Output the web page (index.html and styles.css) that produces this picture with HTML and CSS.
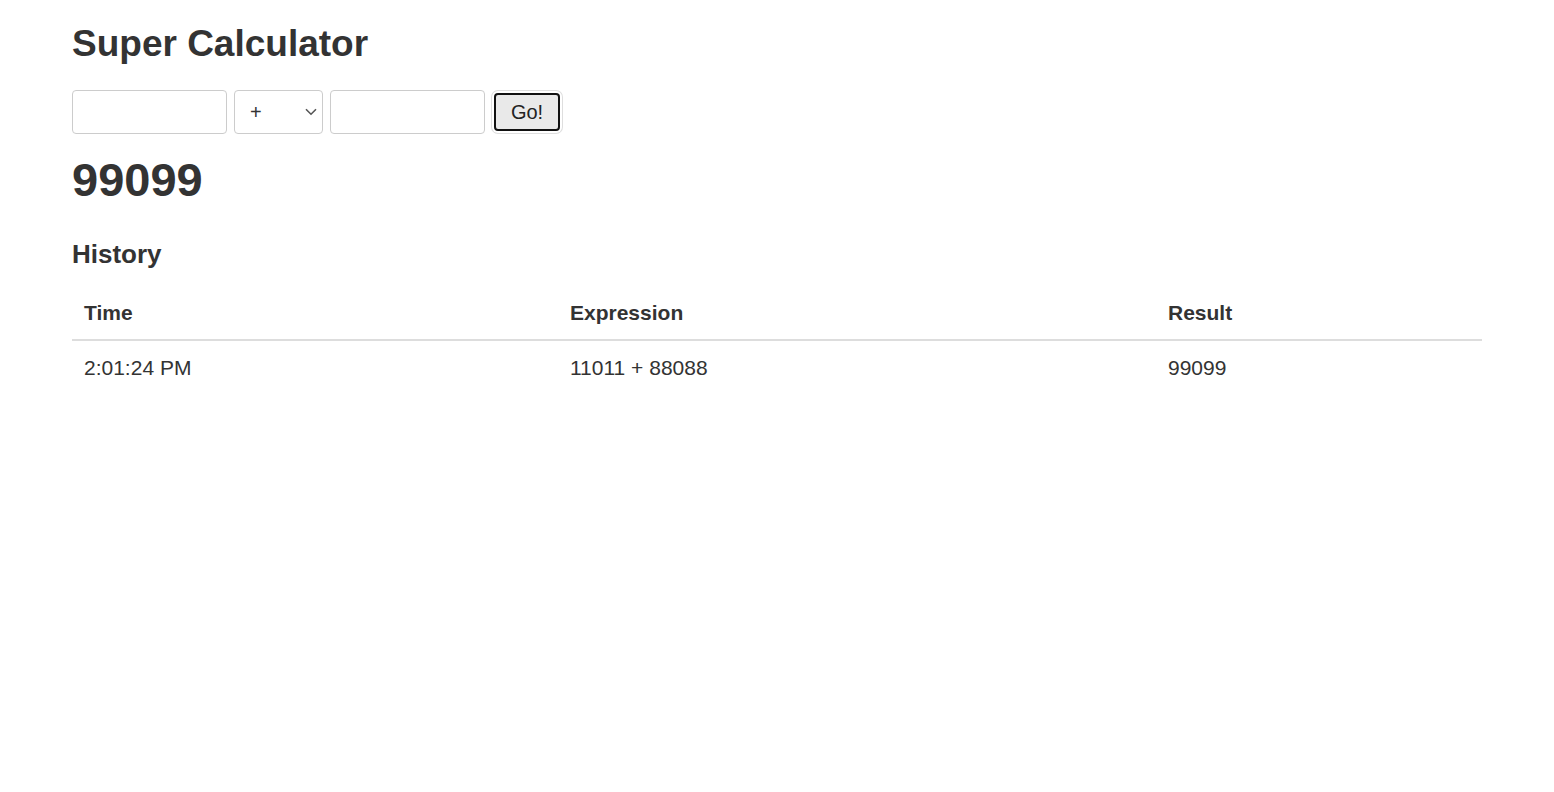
FILE: index.html
```html
<!DOCTYPE html>
<html lang="en">
<head>
<meta charset="utf-8">
<title>Super Calculator</title>
<link rel="stylesheet" href="styles.css">
</head>
<body>
<div class="container">
  <h1 class="title">Super Calculator</h1>
  <form class="calc-form">
    <input class="field field-first" type="text">
    <div class="select-wrap">
      <select class="op-select">
        <option>+</option>
        <option>-</option>
        <option>*</option>
        <option>/</option>
      </select>
      <svg class="chevron" width="12" height="8" viewBox="0 0 12 8"><path d="M1 1.2 L6 6.2 L11 1.2" fill="none" stroke="#555" stroke-width="1.6"/></svg>
    </div>
    <input class="field field-second" type="text">
    <button class="go-btn" type="button">Go!</button>
  </form>
  <h2 class="result">99099</h2>
  <h3 class="history-title">History</h3>
  <table class="history">
    <thead>
      <tr>
        <th class="col-time">Time</th>
        <th class="col-expr">Expression</th>
        <th class="col-result">Result</th>
      </tr>
    </thead>
    <tbody>
      <tr>
        <td>2:01:24 PM</td>
        <td>11011 + 88088</td>
        <td>99099</td>
      </tr>
    </tbody>
  </table>
</div>
</body>
</html>
```
FILE: styles.css
```css
html, body {
  margin: 0;
  padding: 0;
  background: #fff;
}
body {
  font-family: "Liberation Sans", Arial, Helvetica, sans-serif;
  color: #333;
  font-size: 20px;
}
.container {
  padding: 24px 72px 0 72px;
}
.title {
  margin: 0;
  font-size: 37px;
  line-height: 40px;
  font-weight: bold;
}
.calc-form {
  margin-top: 26px;
  display: flex;
  align-items: center;
  height: 44px;
}
.field {
  box-sizing: border-box;
  width: 155px;
  height: 44px;
  border: 1px solid #ccc;
  border-radius: 4px;
  padding: 6px 12px;
  font-family: inherit;
  font-size: 20px;
  color: #333;
  background: #fff;
  margin: 0;
}
.field-first {
  margin-right: 7px;
}
.select-wrap {
  position: relative;
  width: 89px;
  height: 44px;
  margin-right: 7px;
}
.op-select {
  -webkit-appearance: none;
  appearance: none;
  box-sizing: border-box;
  width: 89px;
  height: 44px;
  border: 1px solid #ccc;
  border-radius: 4px;
  background: #fff;
  padding: 0 0 0 15px;
  font-family: inherit;
  font-size: 20px;
  color: #333;
  margin: 0;
}
.chevron {
  position: absolute;
  left: 71px;
  top: 18px;
  pointer-events: none;
}
.go-btn {
  box-sizing: border-box;
  margin-left: 9px;
  width: 66px;
  height: 38px;
  border: 2px solid #111;
  border-radius: 4px;
  background: #e9e9e9;
  box-shadow: 0 0 0 2px #fff, 0 0 0 3px #dedede;
  font-family: inherit;
  font-size: 20px;
  color: #222;
  padding: 0;
}
.result {
  margin: 21px 0 0 0;
  font-size: 47px;
  line-height: 50px;
  font-weight: bold;
}
.history-title {
  margin: 34px 0 0 0;
  font-size: 26px;
  line-height: 30px;
  font-weight: bold;
}
.history {
  margin-top: 18px;
  width: 1410px;
  border-collapse: collapse;
  table-layout: fixed;
}
.col-time { width: 462px; }
.col-expr { width: 574px; }
.col-result { width: 302px; }
.history th {
  text-align: left;
  font-size: 21px;
  font-weight: bold;
  line-height: 28px;
  padding: 12px 12px;
  border-bottom: 2px solid #ddd;
}
.history td {
  font-size: 21px;
  line-height: 28px;
  padding: 13px 12px 12px 12px;
}
```
